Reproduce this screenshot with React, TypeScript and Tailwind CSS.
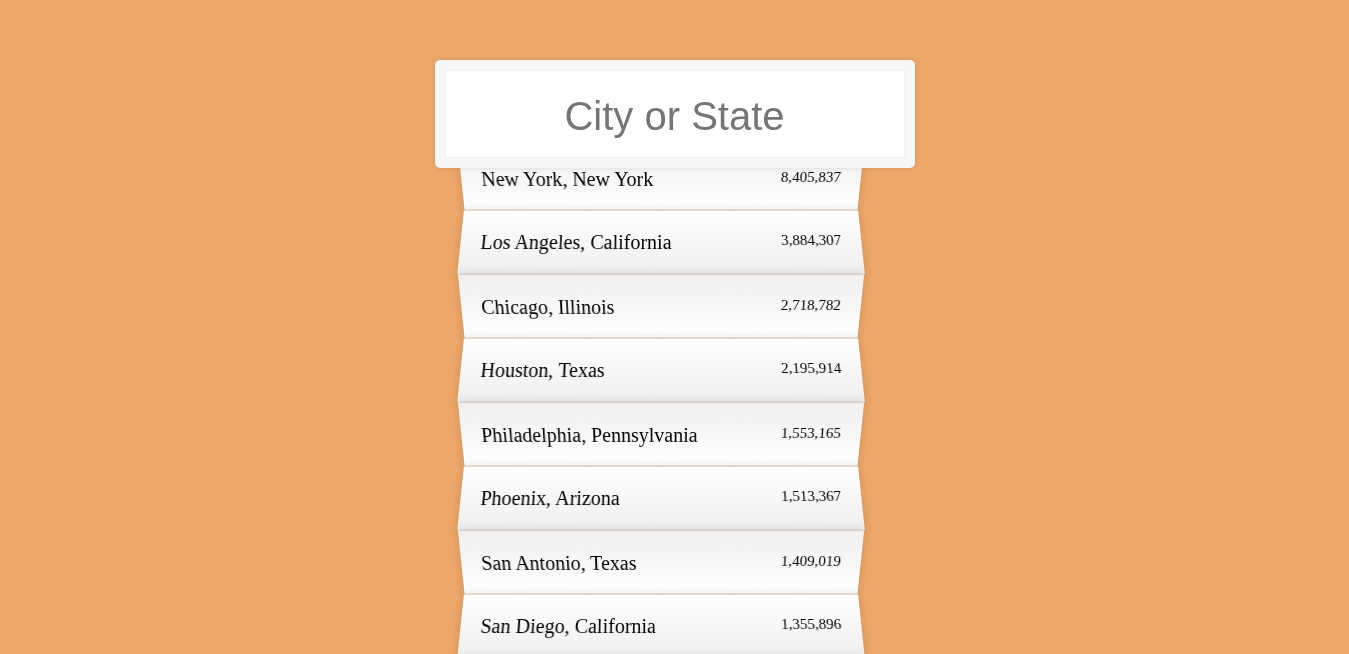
import React, { useState } from 'react';

interface City {
  city: string;
  state: string;
  population: string;
}

const cities: City[] = [
  { city: 'New York', state: 'New York', population: '8,405,837' },
  { city: 'Los Angeles', state: 'California', population: '3,884,307' },
  { city: 'Chicago', state: 'Illinois', population: '2,718,782' },
  { city: 'Houston', state: 'Texas', population: '2,195,914' },
  { city: 'Philadelphia', state: 'Pennsylvania', population: '1,553,165' },
  { city: 'Phoenix', state: 'Arizona', population: '1,513,367' },
  { city: 'San Antonio', state: 'Texas', population: '1,409,019' },
  { city: 'San Diego', state: 'California', population: '1,355,896' },
  { city: 'Dallas', state: 'Texas', population: '1,257,676' },
  { city: 'San Jose', state: 'California', population: '998,537' },
];

// odd rows lean one way, even rows the other (1-based like nth-child)
const oddRow =
  '[transform:perspective(100px)_rotateX(-3deg)_translateY(3px)] bg-linear-to-t from-white to-[#efefef]';
const evenRow =
  '[transform:perspective(100px)_rotateX(3deg)_translateY(2px)_scale(1.001)] bg-linear-to-b from-white to-[#efefef]';

export default function App() {
  const [term, setTerm] = useState('');

  const shown = cities.filter(c =>
    (c.city + ' ' + c.state).toLowerCase().includes(term.toLowerCase())
  );

  return (
    <div className="min-h-screen overflow-hidden bg-[#eda769] font-['Liberation_Serif',serif] text-[20px] text-black">
      <form className="mx-auto max-w-[400px] pt-[60px]" onSubmit={e => e.preventDefault()}>
        <input
          type="text"
          value={term}
          onChange={e => setTerm(e.target.value)}
          placeholder="City or State"
          className="relative z-10 -ml-[40px] block h-[108px] w-[480px] rounded-[5px] border-[10px] border-[#f7f7f7] bg-white px-[20px] pt-[4px] text-center font-['Liberation_Sans',Arial,sans-serif] text-[40px] text-[#333] shadow-[0_0_5px_rgba(0,0,0,0.12),inset_0_0_2px_rgba(0,0,0,0.19)] outline-none placeholder:text-[#757575]"
        />
        <ul className="relative -ml-[14px] -mt-[24px] w-[400px]">
          {shown.map((c, i) => (
            <li
              key={c.city}
              className={`flex justify-between border-b border-[#d8d8d8] px-[20px] pt-[21px] pb-[19px] leading-[23px] shadow-[0_0_10px_rgba(0,0,0,0.14)] ${
                i % 2 === 0 ? oddRow : evenRow
              }`}
            >
              <span>
                {c.city}, {c.state}
              </span>
              <span className="text-[15px] leading-[18px]">{c.population}</span>
            </li>
          ))}
        </ul>
      </form>
    </div>
  );
}
